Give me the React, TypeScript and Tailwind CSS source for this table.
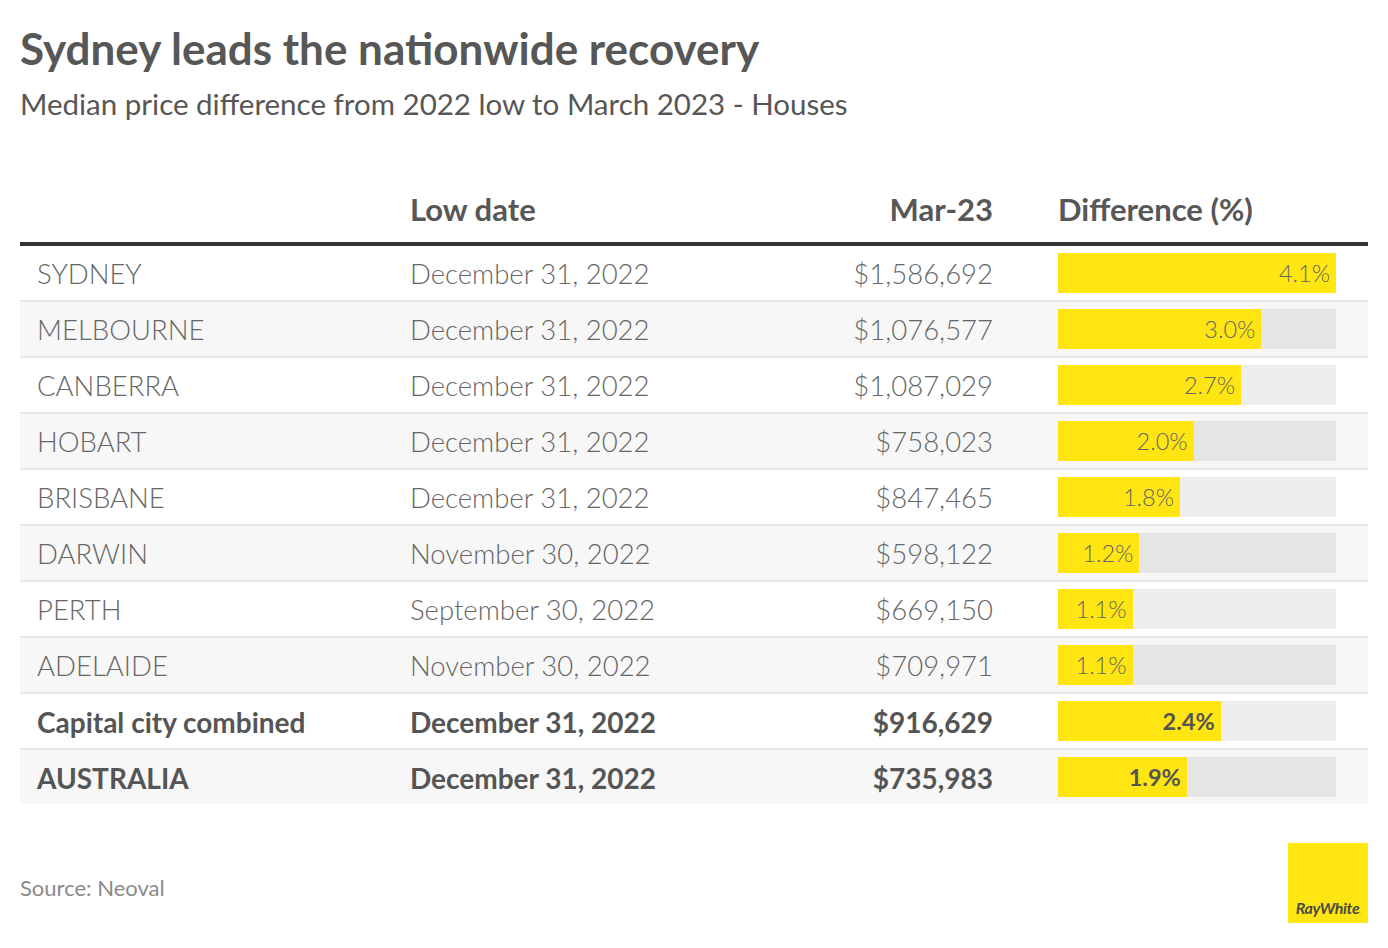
import React from "react";

type Row = { city: string; date: string; price: string; pct: number; bold?: boolean };

const rows: Row[] = [
  { city: "SYDNEY", date: "December 31, 2022", price: "$1,586,692", pct: 4.1 },
  { city: "MELBOURNE", date: "December 31, 2022", price: "$1,076,577", pct: 3.0 },
  { city: "CANBERRA", date: "December 31, 2022", price: "$1,087,029", pct: 2.7 },
  { city: "HOBART", date: "December 31, 2022", price: "$758,023", pct: 2.0 },
  { city: "BRISBANE", date: "December 31, 2022", price: "$847,465", pct: 1.8 },
  { city: "DARWIN", date: "November 30, 2022", price: "$598,122", pct: 1.2 },
  { city: "PERTH", date: "September 30, 2022", price: "$669,150", pct: 1.1 },
  { city: "ADELAIDE", date: "November 30, 2022", price: "$709,971", pct: 1.1 },
  { city: "Capital city combined", date: "December 31, 2022", price: "$916,629", pct: 2.4, bold: true },
  { city: "AUSTRALIA", date: "December 31, 2022", price: "$735,983", pct: 1.9, bold: true },
];

const MAX = 4.1;

export default function App() {
  return (
    <div className="w-[1388px] h-[948px] bg-white px-[20px] pt-[24px] font-['Lato','Noto_Sans',sans-serif] overflow-hidden">
      {/* Heading */}
      <h1 className="text-[44px] leading-[48px] font-bold text-[#575757] whitespace-nowrap">Sydney leads the nationwide recovery</h1>
      <p className="mt-[15px] text-[29.5px] leading-[34px] text-[#575757] whitespace-nowrap">
        Median price difference from 2022 low to March 2023 - Houses
      </p>

      {/* Table */}
      <div className="mt-[71px]">
        <div className="flex items-end pb-[16px] border-b-[4px] border-[#333333] text-[31px] leading-[34px] font-bold text-[#575757] whitespace-nowrap">
          <div className="w-[390px]" />
          <div className="w-[303px]">Low date</div>
          <div className="w-[280px] text-right">Mar-23</div>
          <div className="ml-[65px]">Difference (%)</div>
        </div>

        {rows.map((r, i) => (
          <div
            key={r.city}
            className={
              "flex items-center whitespace-nowrap " +
              (i > 0 ? "h-[56px] border-t-[2px] border-[#e8e8e8] " : "h-[54px] ") +
              (i % 2 === 1 ? "bg-[#f7f7f7] " : "bg-white ") +
              (r.bold ? "font-bold text-[#555555] text-[28px]" : "font-light text-[#666666] text-[27.5px]")
            }
          >
            <div className="w-[390px] pl-[17px] pt-[2px]">{r.city}</div>
            <div className="w-[303px] pt-[2px]">{r.date}</div>
            <div className="w-[280px] text-right pt-[2px]">{r.price}</div>
            <div className="ml-[65px] w-[278px] h-[40px] bg-black/[0.07]">
              <div
                className="h-full bg-[#ffe512] flex items-center justify-end pr-[6px] pt-[2px] text-[23.5px]"
                style={{ width: `${(r.pct / MAX) * 100}%` }}
              >
                {r.pct.toFixed(1)}%
              </div>
            </div>
          </div>
        ))}
      </div>

      {/* Footer */}
      <div className="mt-[39px] flex items-center justify-between">
        <div className="pt-[8px] text-[22px] text-[#8a8a8a]">Source: Neoval</div>
        <div className="w-[80px] h-[80px] bg-[#ffe512] flex items-end justify-center pb-[7px]">
          <span className="text-[16px] leading-none font-bold italic tracking-[-0.4px] text-[#4a4a4a] whitespace-nowrap">
            RayWhite<span className="text-[6px] align-baseline">.</span>
          </span>
        </div>
      </div>
    </div>
  );
}
